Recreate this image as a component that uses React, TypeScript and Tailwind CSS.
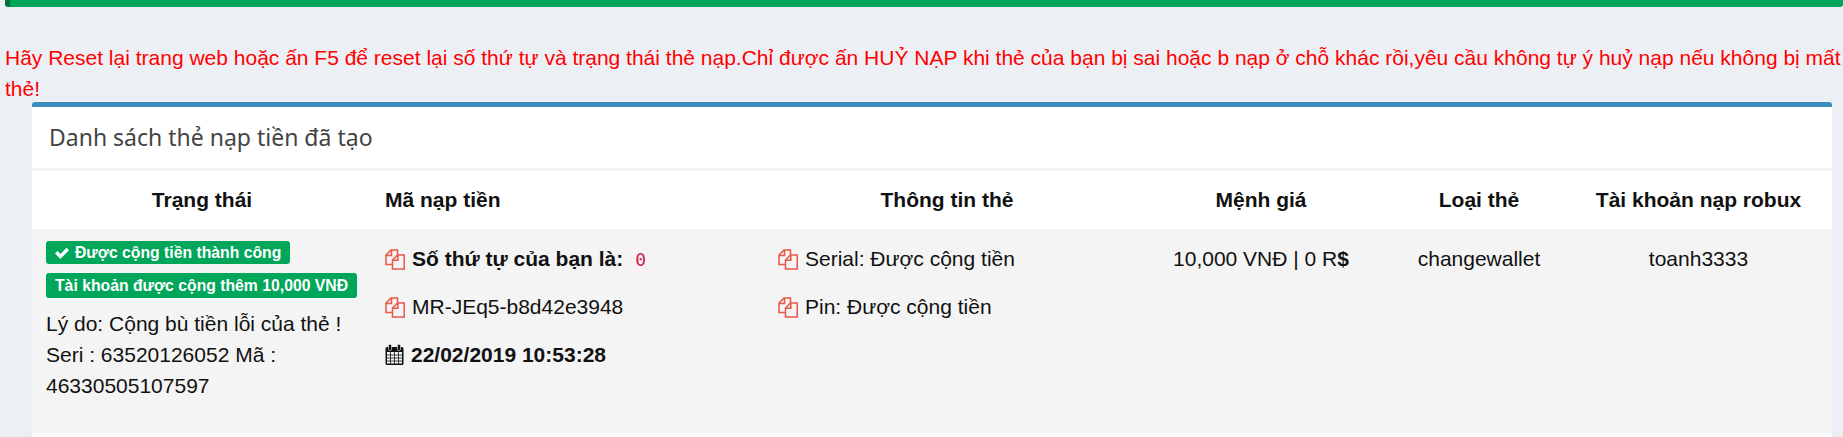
function FilesIcon() {
  return (
    <svg viewBox="0 0 20 21" className="w-5 h-[21px] shrink-0 text-[#e9564a]" fill="none" stroke="currentColor" strokeWidth="1.5">
      <path d="M7 15.5H1V6L6 1H12.5V6" />
      <path d="M6.5 1V6.5H1" />
      <path d="M19.2 20H7.5V11L12.5 6H19.2Z" fill="#f4f4f4" />
      <path d="M12.8 6V11.2H7.5" />
    </svg>
  );
}

function CalendarIcon() {
  return (
    <svg viewBox="0 0 20 22" className="w-[20px] h-[22px] shrink-0 text-[#111]">
      <rect x="0.5" y="3" width="18" height="18" rx="1.5" fill="currentColor" />
      <rect x="2" y="8" width="15" height="11.5" fill="#f4f4f4" />
      <path d="M5.5 8V20M9.5 8V20M13.5 8V20M2 11H17M2 14H17M2 17H17" stroke="currentColor" strokeWidth="0.8" />
      <rect x="3.5" y="0.5" width="3" height="6" rx="1" fill="currentColor" stroke="#f4f4f4" strokeWidth="0.6" />
      <rect x="12.5" y="0.5" width="3" height="6" rx="1" fill="currentColor" stroke="#f4f4f4" strokeWidth="0.6" />
    </svg>
  );
}

const headers = ['Trạng thái', 'Mã nạp tiền', 'Thông tin thẻ', 'Mệnh giá', 'Loại thẻ', 'Tài khoản nạp robux'];

export default function App() {
  return (
    <div className="min-h-[437px] bg-[#ecf0f5] font-['Liberation_Sans',Arial,sans-serif] text-[21px] text-[#111] overflow-hidden">
      <div className="ml-[5px] h-[7px] rounded-b-[3px] bg-[#00a65a] border-l-[5px] border-[#00733e]" />
      <p className="mt-[35px] ml-[5px] leading-[31px] text-[#ff0000]">
        Hãy Reset lại trang web hoặc ấn F5 để reset lại số thứ tự và trạng thái thẻ nạp.Chỉ được ấn HUỶ NẠP khi thẻ của bạn bị sai hoặc b nạp ở chỗ khác rồi,yêu cầu không tự ý huỷ nạp nếu không bị mất thẻ!
      </p>
      <div className="ml-[32px] w-[1800px] mt-[-2px] bg-white border-t-[5px] border-[#3c8dbc] rounded-[3px] shadow-[0_1px_1px_rgba(0,0,0,0.1)] pb-[20px]">
        <h3 className="h-[64px] border-b-[3px] border-[#f4f4f4] pl-[17px] flex items-center font-['Noto_Sans',sans-serif] text-[23px] text-[#444]">
          Danh sách thẻ nạp tiền đã tạo
        </h3>
        <table className="w-full table-fixed border-collapse">
          <colgroup>
            <col className="w-[340px]" />
            <col className="w-[393px]" />
            <col className="w-[364px]" />
            <col className="w-[264px]" />
            <col className="w-[172px]" />
            <col className="w-[267px]" />
          </colgroup>
          <thead>
            <tr className="h-[58px]">
              {headers.map((h, i) => (
                <th key={h} className={`font-bold ${i === 1 ? 'text-left pl-[13px]' : 'text-center'}`}>
                  {h}
                </th>
              ))}
            </tr>
          </thead>
          <tbody>
            <tr className="bg-[#f4f4f4] h-[204px] align-top">
              <td className="pl-[14px] pr-2 pt-[12px]">
                <div className="flex flex-col items-start gap-[9px]">
                  <span className="flex items-center gap-[5px] h-[23px] pl-[8px] pr-[9px] rounded-[3px] bg-[#00a65a] text-white font-bold text-[15.75px]">
                    <svg viewBox="0 0 16 16" className="w-[16px] h-[16px] fill-white">
                      <path d="M1 8.5 3.4 6l3 3 6.2-6.3L15 5.2 6.4 14Z" />
                    </svg>
                    Được cộng tiền thành công
                  </span>
                  <span className="flex items-center h-[25px] px-[9px] rounded-[3px] bg-[#00a65a] text-white font-bold text-[15.75px]">
                    Tài khoản được cộng thêm 10,000 VNĐ
                  </span>
                </div>
                <p className="mt-[10px] leading-[31px]">
                  Lý do: Cộng bù tiền lỗi của thẻ !
                  <br />
                  Seri : 63520126052 Mã : 46330505107597
                </p>
              </td>
              <td className="pl-[13px] pt-[18px]">
                <div className="flex items-center gap-[7px] h-[24px]">
                  <FilesIcon />
                  <b>Số thứ tự của bạn là:</b>
                  <code className="ml-[1px] px-[4px] bg-[#f9f2f4] text-[#c7254e] text-[18px] font-['DejaVu_Sans_Mono',monospace]">0</code>
                </div>
                <div className="flex items-center gap-[7px] h-[24px] mt-[24px]">
                  <FilesIcon />
                  MR-JEq5-b8d42e3948
                </div>
                <div className="flex items-center gap-[6px] h-[24px] mt-[24px] font-bold">
                  <CalendarIcon />
                  22/02/2019 10:53:28
                </div>
              </td>
              <td className="pl-[13px] pt-[18px]">
                <div className="flex items-center gap-[7px] h-[24px]">
                  <FilesIcon />
                  Serial: Được cộng tiền
                </div>
                <div className="flex items-center gap-[7px] h-[24px] mt-[24px]">
                  <FilesIcon />
                  Pin: Được cộng tiền
                </div>
              </td>
              <td className="text-center pt-[18px] leading-[24px]">
                10,000 VNĐ | 0 R<b>$</b>
              </td>
              <td className="text-center pt-[18px] leading-[24px]">changewallet</td>
              <td className="text-center pt-[18px] leading-[24px]">toanh3333</td>
            </tr>
          </tbody>
        </table>
      </div>
    </div>
  );
}
